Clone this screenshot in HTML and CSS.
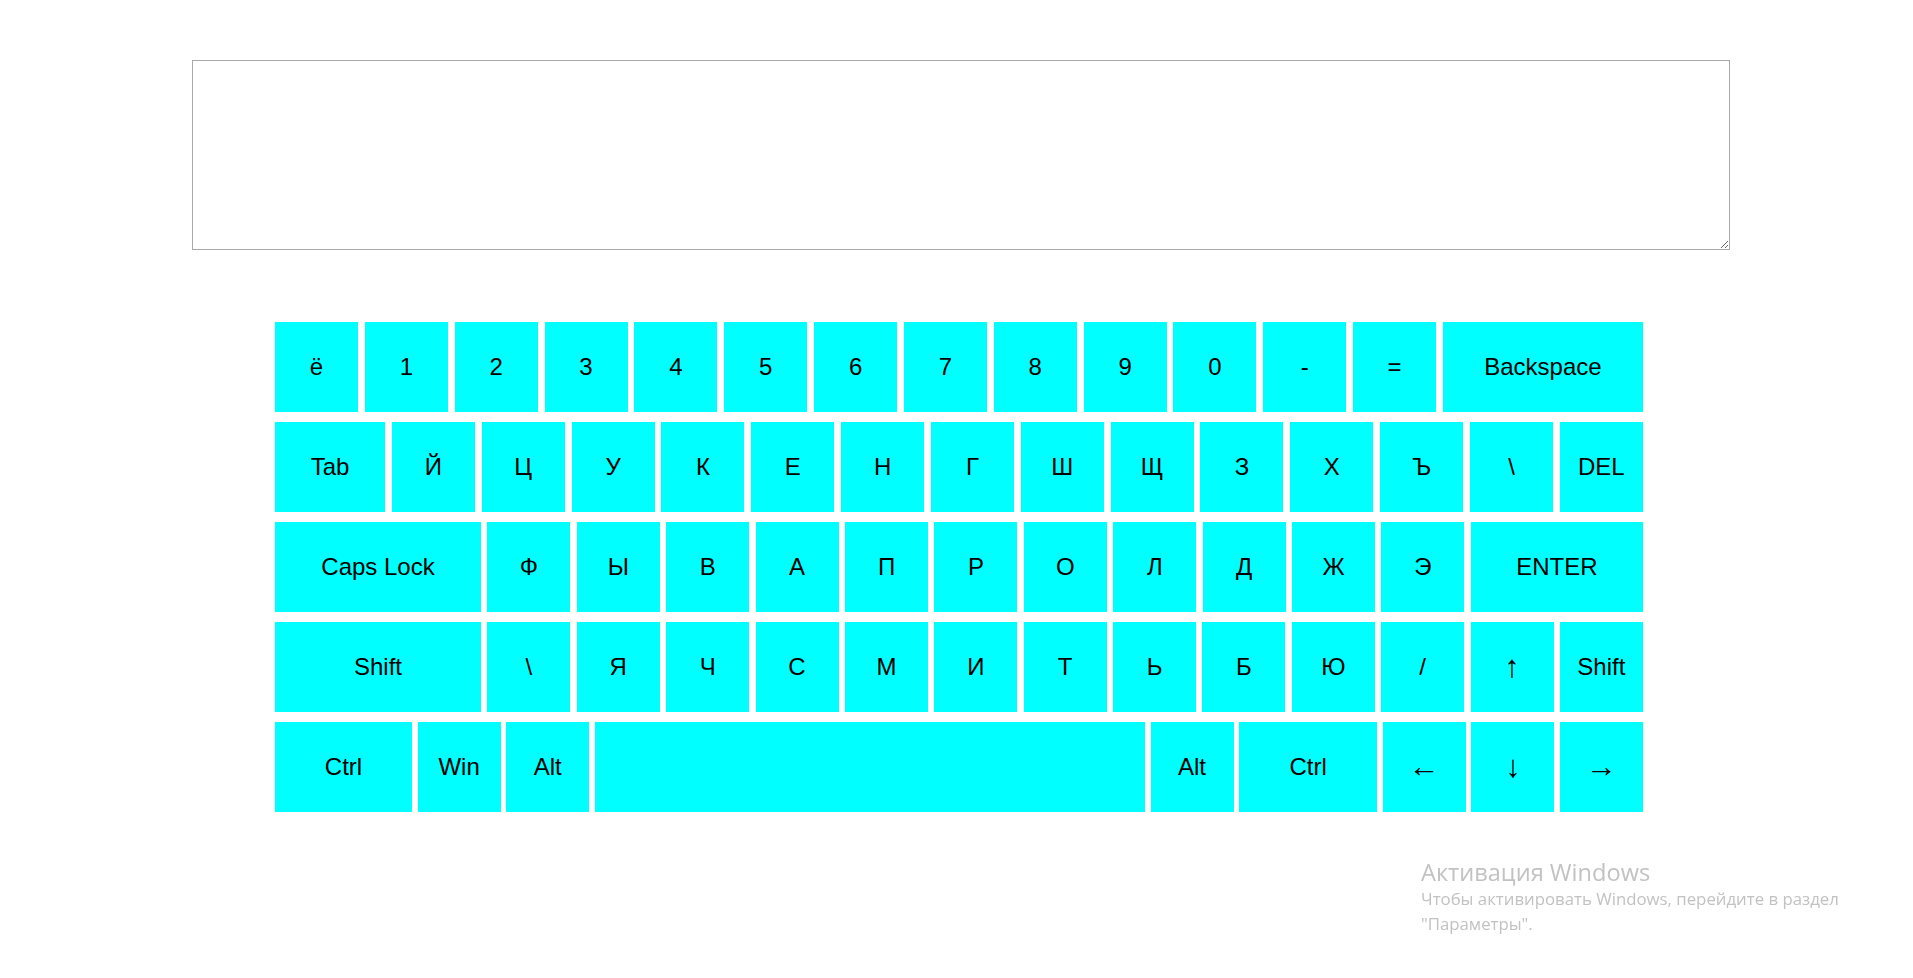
FILE: index.html
```html
<!DOCTYPE html>
<html lang="ru">
<head>
    <meta charset="UTF-8" />
    <meta name="viewport" content="width=device-width, initial-scale=1.0"/>
    <title>Виртуальная клавиатура</title>
    <link rel="stylesheet" href="styles.css">
</head>
<body>
    <textarea class="output" id="output"></textarea>

    <div class="keyboard">
        <div class="row">
            <div class="key">ё</div>
            <div class="key">1</div>
            <div class="key">2</div>
            <div class="key">3</div>
            <div class="key">4</div>
            <div class="key">5</div>
            <div class="key">6</div>
            <div class="key">7</div>
            <div class="key">8</div>
            <div class="key">9</div>
            <div class="key">0</div>
            <div class="key">-</div>
            <div class="key">=</div>
            <div class="key backspace">Backspace</div>
        </div>
        <div class="row">
            <div class="key tab">Tab</div>
            <div class="key">Й</div>
            <div class="key">Ц</div>
            <div class="key">У</div>
            <div class="key">К</div>
            <div class="key">Е</div>
            <div class="key">Н</div>
            <div class="key">Г</div>
            <div class="key">Ш</div>
            <div class="key">Щ</div>
            <div class="key">З</div>
            <div class="key">Х</div>
            <div class="key">Ъ</div>
            <div class="key">\</div>
            <div class="key">DEL</div>
        </div>
        <div class="row">
            <div class="key caps">Caps Lock</div>
            <div class="key">Ф</div>
            <div class="key">Ы</div>
            <div class="key">В</div>
            <div class="key">А</div>
            <div class="key">П</div>
            <div class="key">Р</div>
            <div class="key">О</div>
            <div class="key">Л</div>
            <div class="key">Д</div>
            <div class="key">Ж</div>
            <div class="key">Э</div>
            <div class="key enter">ENTER</div>
        </div>
        <div class="row">
            <div class="key shift">Shift</div>
            <div class="key">\</div>
            <div class="key">Я</div>
            <div class="key">Ч</div>
            <div class="key">С</div>
            <div class="key">М</div>
            <div class="key">И</div>
            <div class="key">Т</div>
            <div class="key">Ь</div>
            <div class="key">Б</div>
            <div class="key">Ю</div>
            <div class="key">/</div>
            <div class="key arrow">↑</div>
            <div class="key">Shift</div>
        </div>
        <div class="row">
            <div class="key ctrl">Ctrl</div>
            <div class="key">Win</div>
            <div class="key">Alt</div>
            <div class="key space"></div>
            <div class="key">Alt</div>
            <div class="key ctrl-right">Ctrl</div>
            <div class="key arrow">←</div>
            <div class="key arrow">↓</div>
            <div class="key arrow">→</div>
        </div>
    </div>

    <div class="activation">
        <div class="activation-title">Активация Windows</div>
        <div class="activation-text">Чтобы активировать Windows, перейдите в раздел<br>"Параметры".</div>
    </div>
</body>
</html>
```

FILE: styles.css
```css
body {
    margin: 0;
    padding: 60px 0 0 0;
    background: #ffffff;
    font-family: "Liberation Sans", Arial, sans-serif;
}
.output {
    display: block;
    box-sizing: border-box;
    width: 1538px;
    height: 190px;
    margin: 0 0 0 192px;
    border: 1px solid #a9a9a9;
    padding: 2px;
    font-family: "Liberation Mono", monospace;
    font-size: 13px;
}
.keyboard {
    width: 1368px;
    margin: 72px 0 0 275px;
}
.row {
    display: flex;
    justify-content: space-between;
    margin-bottom: 10px;
}
.key {
    box-sizing: border-box;
    width: 83px;
    height: 90px;
    background: #00ffff;
    color: #000000;
    font-size: 24px;
    display: flex;
    align-items: center;
    justify-content: center;
    cursor: pointer;
}
.backspace {
    width: 200px;
}
.tab {
    width: 110px;
}
.caps {
    width: 206px;
}
.enter {
    width: 172px;
}
.shift {
    width: 206px;
}
.ctrl {
    width: 137px;
}
.ctrl-right {
    width: 138px;
}
.space {
    width: 550px;
}
.arrow {
    font-size: 31px;
}
.activation {
    position: fixed;
    left: 1421px;
    top: 857px;
    color: #c2c2c2;
    font-family: "Open Sans", "Noto Sans", sans-serif;
}
.activation-title {
    font-size: 23.6px;
    line-height: 30px;
}
.activation-text {
    font-size: 16.8px;
    line-height: 24.5px;
}
```
